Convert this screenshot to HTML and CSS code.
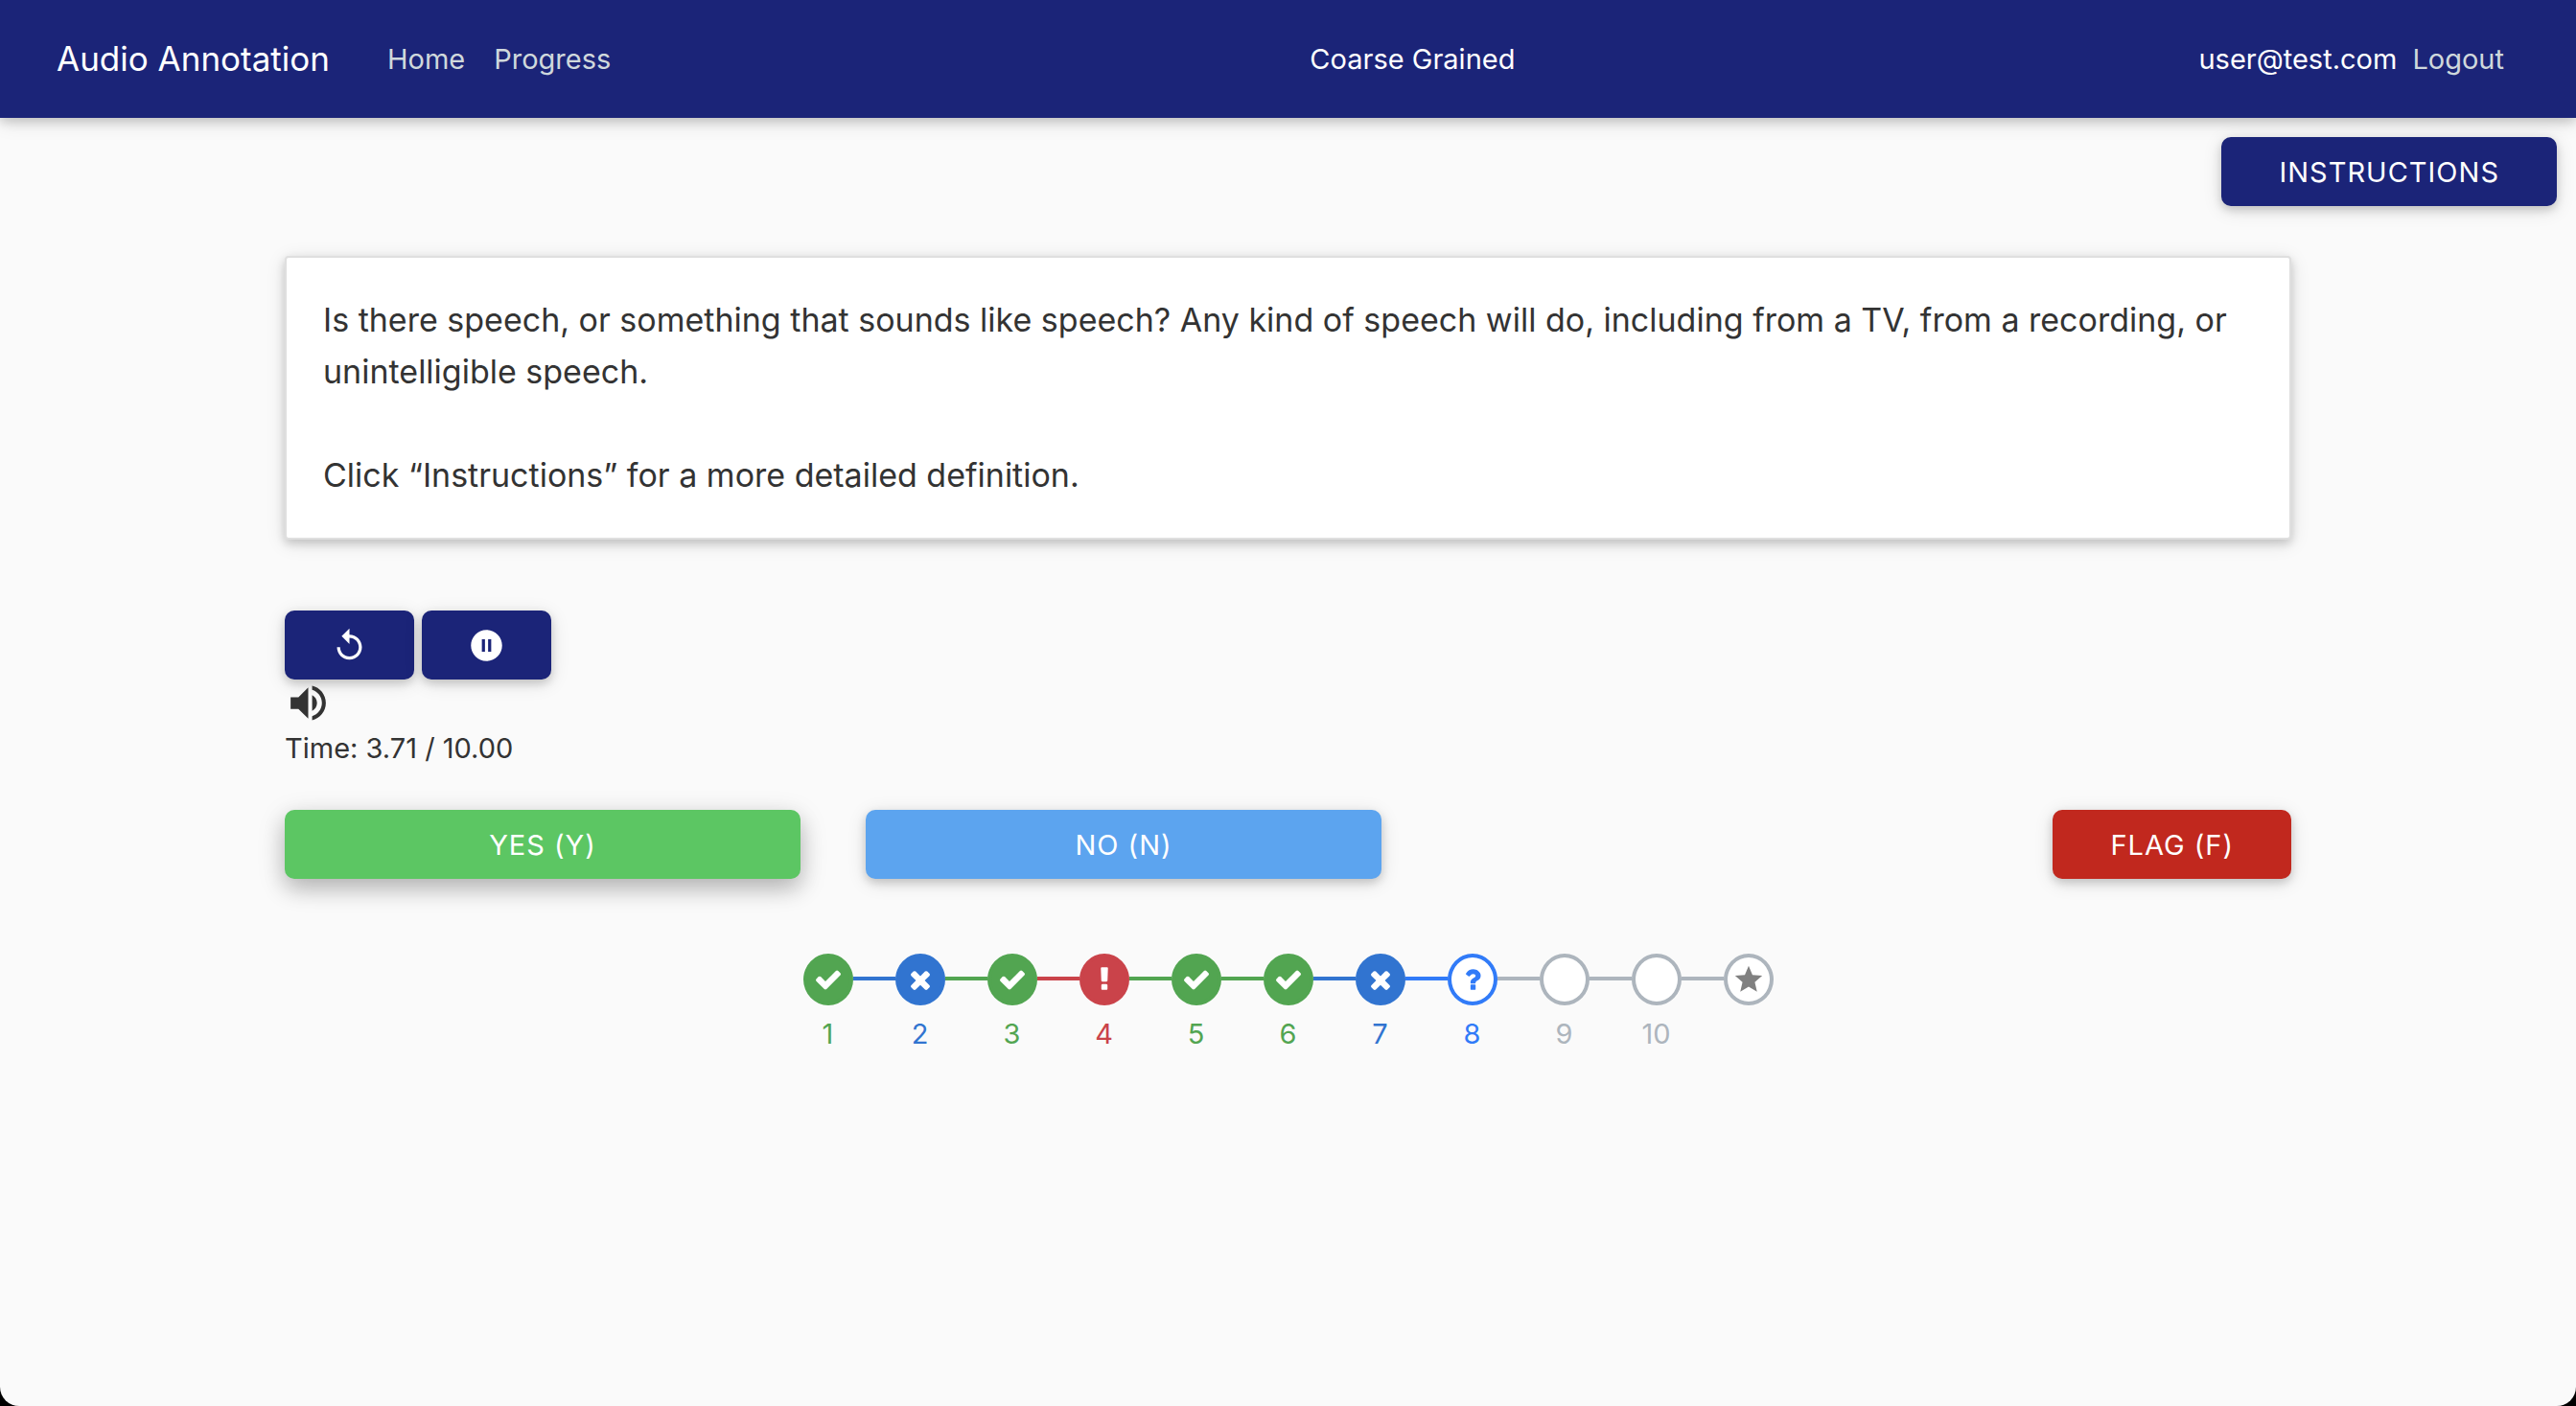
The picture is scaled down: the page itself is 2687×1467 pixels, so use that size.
FILE: index.html
```html
<!DOCTYPE html>
<html lang="en">
<head>
<meta charset="utf-8">
<title>Audio Annotation</title>
<link rel="stylesheet" href="styles.css">
</head>
<body>
<svg class="sprite" aria-hidden="true">
  <symbol id="check" viewBox="0 0 1792 1792"><path d="M1671 566q0 40-28 68l-724 724-136 136q-28 28-68 28t-68-28l-136-136-362-362q-28-28-28-68t28-68l136-136q28-28 68-28t68 28l294 295 656-657q28-28 68-28t68 28l136 136q28 28 28 68z"/></symbol>
  <symbol id="times" viewBox="0 0 1792 1792"><path d="M1490 1322q0 40-28 68l-136 136q-28 28-68 28t-68-28l-294-294-294 294q-28 28-68 28t-68-28l-136-136q-28-28-28-68t28-68l294-294-294-294q-28-28-28-68t28-68l136-136q28-28 68-28t68 28l294 294 294-294q28-28 68-28t68 28l136 136q28 28 28 68t-28 68l-294 294 294 294q28 28 28 68z"/></symbol>
  <symbol id="exclamation" viewBox="0 0 1792 1792"><path d="M1088 1248v224q0 26-19 45t-45 19h-256q-26 0-45-19t-19-45v-224q0-26 19-45t45-19h256q26 0 45 19t19 45zm30-1056l-28 768q-1 26-20.5 45t-45.5 19h-256q-26 0-45.5-19t-20.5-45l-28-768q-1-26 17.5-45t44.5-19h320q26 0 44.5 19t17.5 45z"/></symbol>
  <symbol id="question" viewBox="0 0 1792 1792"><path d="M1088 1256v240q0 16-12 28t-28 12h-240q-16 0-28-12t-12-28v-240q0-16 12-28t28-12h240q16 0 28 12t12 28zm316-600q0 54-15.5 101t-35 76.5-55 59.5-57.5 43.5-61 35.5q-41 23-68.5 65t-27.5 67q0 17-12 32.5t-28 15.5h-240q-15 0-25.5-18.5t-10.5-37.5v-45q0-83 65-156.5t143-108.5q59-27 84-56t25-76q0-42-46.5-74t-107.5-32q-65 0-108 29-35 25-107 115-13 16-31 16-12 0-25-8l-164-125q-13-10-15.5-25t5.5-28q160-266 464-266 80 0 161 31t146 83 106 127.5 41 158.5z"/></symbol>
  <symbol id="star" viewBox="0 0 24 24"><path d="M12 17.27L18.18 21l-1.64-7.03L22 9.24l-7.19-.61L12 2 9.19 8.63 2 9.24l5.46 4.73L5.82 21z"/></symbol>
</svg>
<div class="page">
  <header class="navbar">
    <nav class="nav-group">
      <a class="brand" href="#">Audio Annotation</a>
      <a class="nav-link" href="#">Home</a>
      <a class="nav-link" href="#">Progress</a>
    </nav>
    <span class="nav-title">Coarse Grained</span>
    <div class="nav-user">
      <span>user@test.com</span>
      <a class="nav-link" href="#">Logout</a>
    </div>
  </header>

  <div class="toolbar">
    <button class="btn btn-navy" type="button">INSTRUCTIONS</button>
  </div>

  <main class="container">
    <section class="card">
      <p>Is there speech, or something that sounds like speech? Any kind of speech will do, including from a TV, from a recording, or unintelligible speech.</p>
      <p>Click “Instructions” for a more detailed definition.</p>
    </section>

    <section class="player">
      <div class="player-controls">
        <button class="btn btn-navy btn-icon" type="button" aria-label="Replay">
          <svg class="icon" viewBox="0 0 24 24"><path d="M12 5V1L7 6l5 5V7c3.310 0 6 2.690 6 6s-2.690 6-6 6-6-2.690-6-6H4c0 4.420 3.580 8 8 8s8-3.580 8-8-3.580-8-8-8z"/></svg>
        </button>
        <button class="btn btn-navy btn-icon" type="button" aria-label="Pause">
          <svg class="icon" viewBox="0 0 24 24"><path d="M12 2C6.480 2 2 6.480 2 12s4.480 10 10 10 10-4.480 10-10S17.520 2 12 2zm-1 14H9V8h2v8zm4 0h-2V8h2v8z"/></svg>
        </button>
      </div>
      <svg class="volume" viewBox="0 0 24 24" role="img" aria-label="Volume"><path d="M3 9v6h4l5 5V4L7 9H3zm13.500 3c0-1.770-1.020-3.290-2.500-4.030v8.050c1.480-.73 2.500-2.250 2.500-4.020zM14 3.230v2.060c2.890.86 5 3.540 5 6.710s-2.110 5.850-5 6.710v2.060c4.010-.91 7-4.490 7-8.770s-2.990-7.860-7-8.770z"/></svg>
      <div class="time">Time: 3.71 / 10.00</div>
    </section>

    <div class="answers">
      <button class="btn btn-green btn-raised" type="button">YES (Y)</button>
      <button class="btn btn-blue" type="button">NO (N)</button>
      <button class="btn btn-red" type="button">FLAG (F)</button>
    </div>

    <ol class="steps">
      <li class="step yes"><span class="dot"><svg><use href="#check"/></svg></span><span class="num">1</span></li>
      <li class="step no"><span class="dot"><svg><use href="#times"/></svg></span><span class="num">2</span></li>
      <li class="step yes"><span class="dot"><svg><use href="#check"/></svg></span><span class="num">3</span></li>
      <li class="step flag"><span class="dot"><svg><use href="#exclamation"/></svg></span><span class="num">4</span></li>
      <li class="step yes"><span class="dot"><svg><use href="#check"/></svg></span><span class="num">5</span></li>
      <li class="step yes"><span class="dot"><svg><use href="#check"/></svg></span><span class="num">6</span></li>
      <li class="step no"><span class="dot"><svg><use href="#times"/></svg></span><span class="num">7</span></li>
      <li class="step current" aria-current="step"><span class="dot"><svg><use href="#question"/></svg></span><span class="num">8</span></li>
      <li class="step todo"><span class="dot"></span><span class="num">9</span></li>
      <li class="step todo"><span class="dot"></span><span class="num">10</span></li>
      <li class="step todo finish"><span class="dot"><svg><use href="#star"/></svg></span></li>
    </ol>
  </main>
</div>
</body>
</html>
```
FILE: styles.css
```css
* {
  box-sizing: border-box;
}

html {
  background: #000;
}

body {
  margin: 0;
  color: #333;
  font: 400 29px/45px Inter, "Liberation Sans", sans-serif;
}

.sprite {
  display: none;
}

.page {
  min-height: 100vh;
  background: #fafafa;
  border-radius: 0 0 20px 20px;
}

.navbar {
  display: flex;
  align-items: center;
  justify-content: space-between;
  padding: 34px 75px 35px 59px;
  background: #1b2478;
  color: #fff;
  box-shadow: 0 4px 10px rgba(0, 0, 0, .16), 0 4px 20px rgba(0, 0, 0, .12);
}

.nav-group {
  display: flex;
  align-items: center;
  gap: 30px;
  padding-right: 16px;
}

.brand {
  margin-right: 30px;
  color: #fff;
  font-size: 35px;
  line-height: 54px;
  text-decoration: none;
}

.nav-link {
  color: #cfd8dc;
  text-decoration: none;
}

.nav-user {
  display: flex;
  gap: 16px;
}

.toolbar {
  display: flex;
  justify-content: flex-end;
  padding: 20px 20px 0;
}

.btn {
  display: flex;
  align-items: center;
  justify-content: center;
  height: 72px;
  padding: 0 60px;
  border: 0;
  border-radius: 10px;
  color: #fff;
  font: inherit;
  letter-spacing: 1px;
  white-space: nowrap;
  cursor: pointer;
  box-shadow: 0 4px 10px rgba(0, 0, 0, .16), 0 4px 20px rgba(0, 0, 0, .12);
}

.btn-raised {
  box-shadow: 0 10px 22px rgba(0, 0, 0, .18), 0 8px 30px rgba(0, 0, 0, .15);
}

.btn-navy {
  background: #1b2478;
}

.btn-green {
  background: #5cc663;
}

.btn-blue {
  background: #5ca4ef;
}

.btn-red {
  justify-self: end;
  background: #c1281e;
}

.btn-icon {
  padding: 0 48px;
}

.icon {
  width: 39px;
  height: 39px;
  fill: currentColor;
}

.container {
  width: 92%;
  max-width: 2093px;
  margin: 52px auto 0;
}

.card {
  padding: 38px;
  background: #fff;
  border: 2px solid #dfdfdf;
  border-radius: 4px;
  font-size: 34px;
  line-height: 54px;
  box-shadow: 0 4px 10px rgba(0, 0, 0, .16), 0 4px 20px rgba(0, 0, 0, .12);
}

.card p {
  margin: 0;
}

.card p + p {
  margin-top: 54px;
}

.player {
  margin-top: 74px;
}

.player-controls {
  display: flex;
  gap: 8px;
}

.volume {
  display: block;
  width: 49px;
  height: 49px;
  fill: #333;
}

.answers {
  display: grid;
  grid-template-columns: minmax(0, 538px) minmax(0, 538px) 1fr;
  column-gap: 68px;
  margin-top: 42px;
}

.steps {
  display: flex;
  justify-content: center;
  gap: 44px;
  margin: 78px 0 0;
  padding: 0;
  list-style: none;
}

.step {
  position: relative;
  display: flex;
  flex-direction: column;
  align-items: center;
  gap: 7px;
  width: 52px;
  color: var(--tone);
}

/* Connector to the previous step */
.step + .step::before {
  content: "";
  position: absolute;
  top: 24px;
  right: 100%;
  width: 44px;
  height: 4px;
  background: var(--tone);
}

.dot {
  display: flex;
  align-items: center;
  justify-content: center;
  width: 52px;
  height: 54px;
  border: 4px solid var(--tone);
  border-radius: 50%;
  background: var(--tone);
}

.dot svg {
  flex: none;
  width: 30px;
  height: 30px;
  fill: #fff;
}

.yes {
  --tone: #52a551;
}

.no {
  --tone: #3174d0;
}

.flag {
  --tone: #ca434a;
}

.current {
  --tone: #317bf8;
}

.todo {
  --tone: #adb5bd;
}

.current .dot,
.todo .dot {
  background: #fff;
}

.current .dot svg {
  fill: #317bf8;
}

.finish .dot svg {
  width: 34px;
  height: 34px;
  fill: #808080;
}
```
